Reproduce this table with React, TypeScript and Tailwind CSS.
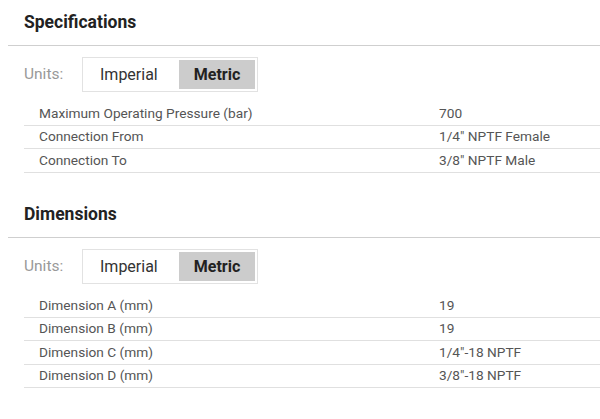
const SPECS = [
  { label: "Maximum Operating Pressure (bar)", value: "700" },
  { label: "Connection From", value: "1/4\" NPTF Female" },
  { label: "Connection To", value: "3/8\" NPTF Male" },
];

const DIMS = [
  { label: "Dimension A (mm)", value: "19" },
  { label: "Dimension B (mm)", value: "19" },
  { label: "Dimension C (mm)", value: "1/4\"-18 NPTF" },
  { label: "Dimension D (mm)", value: "3/8\"-18 NPTF" },
];

function Section({ title, rows }: { title: string; rows: { label: string; value: string }[] }) {
  return (
    <section>
      <div className="h-[45px] flex items-center pl-4 border-b border-[#cfcfcf] box-content">
        <h2 className="text-[17.5px] font-bold text-[#222]">{title}</h2>
      </div>

      {/* Units toggle */}
      <div className="mt-[11px] ml-4 flex items-center">
        <span className="w-[58px] text-[15.5px] text-[#999]">Units:</span>
        <div className="h-[35px] flex items-stretch border border-[#e2e2e2] p-[2px]">
          <button className="w-[94px] pl-[15px] text-left text-[16px] text-[#333]">Imperial</button>
          <button className="w-[76px] text-[16px] font-bold text-[#222] bg-[#cccccc]">Metric</button>
        </div>
      </div>

      <div className="mt-[10px] ml-4">
        {rows.map((r) => (
          <div key={r.label} className="h-[23.5px] grid grid-cols-[400px_1fr] items-center border-b border-[#e0e0e0] text-[13.7px] text-[#555]">
            <div className="pl-[15px]">{r.label}</div>
            <div className="pl-[15px]">{r.value}</div>
          </div>
        ))}
      </div>
    </section>
  );
}

export default function App() {
  return (
    <div className="w-[600px] h-[419px] bg-white pl-2 font-['Roboto',sans-serif] overflow-hidden">
      <Section title="Specifications" rows={SPECS} />
      <div className="mt-[19.5px]">
        <Section title="Dimensions" rows={DIMS} />
      </div>
    </div>
  );
}
